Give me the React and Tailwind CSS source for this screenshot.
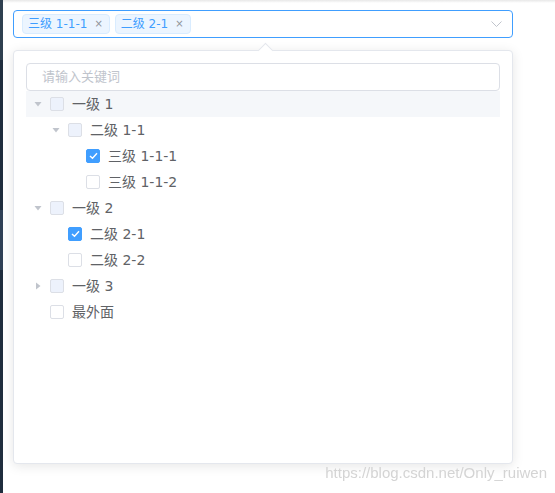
const tree = [
  { label: "一级 1", level: 1, expand: "open", box: "half", hover: true },
  { label: "二级 1-1", level: 2, expand: "open", box: "half" },
  { label: "三级 1-1-1", level: 3, box: "on" },
  { label: "三级 1-1-2", level: 3, box: "off" },
  { label: "一级 2", level: 1, expand: "open", box: "half" },
  { label: "二级 2-1", level: 2, box: "on" },
  { label: "二级 2-2", level: 2, box: "off" },
  { label: "一级 3", level: 1, expand: "closed", box: "half" },
  { label: "最外面", level: 1, box: "off" },
];

const indent = { 1: "pl-0", 2: "pl-[18px]", 3: "pl-[36px]" };

function Caret({ state }) {
  if (!state) return <span className="w-6 shrink-0" />;
  return (
    <span className="w-6 shrink-0 flex items-center justify-center">
      <svg
        width="8"
        height="8"
        viewBox="0 0 8 8"
        className={state === "open" ? "rotate-90" : ""}
      >
        <path d="M2 0.5 L6.5 4 L2 7.5 Z" fill="#c0c4cc" />
      </svg>
    </span>
  );
}

function Checkbox({ state }) {
  if (state === "on") {
    return (
      <span className="w-[14px] h-[14px] rounded-[2px] bg-[#409eff] border border-[#409eff] flex items-center justify-center shrink-0">
        <svg width="9" height="8" viewBox="0 0 9 8">
          <path d="M1 4 L3.5 6.3 L8 1.3" stroke="#fff" strokeWidth="1.4" fill="none" />
        </svg>
      </span>
    );
  }
  return (
    <span
      className={
        "w-[14px] h-[14px] rounded-[2px] border border-[#dcdfe6] shrink-0 " +
        (state === "half" ? "bg-[#edf2fc]" : "bg-white")
      }
    />
  );
}

function Tag({ children }) {
  return (
    <span className="h-5 pl-[5px] pr-[6px] flex items-center gap-[7px] rounded-[4px] bg-[#ecf5ff] border border-[#d9ecff] text-[#409eff] text-[12px]">
      {children}
      <span className="text-[#909399] text-[10px] leading-none">×</span>
    </span>
  );
}

export default function App() {
  return (
    <div
      className="w-[555px] h-[493px] flex bg-white overflow-hidden"
      style={{ fontFamily: '"DejaVu Sans", "Noto Sans CJK SC", sans-serif' }}
    >
      {/* sidebar edge */}
      <div className="w-[3px] flex flex-col">
        <div className="h-[60px] bg-[#2f4050]" />
        <div className="h-[150px] bg-[#1f2d3d]" />
        <div className="h-[60px] bg-[#304156]" />
        <div className="flex-1 bg-[#1f2d3d]" />
      </div>

      <div className="flex-1 relative flex flex-col">
        <div className="h-[3px] bg-gradient-to-b from-[#e8e8e8] to-white" />

        {/* select box */}
        <div className="ml-[10px] mt-[7px] w-[500px] h-[28px] border border-[#409eff] rounded-[4px] flex items-center pl-2 pr-[10px]">
          <div className="flex items-center gap-[5px] flex-1">
            <Tag>三级 1-1-1</Tag>
            <Tag>二级 2-1</Tag>
          </div>
          <svg width="11" height="6" viewBox="0 0 11 6">
            <path d="M0.5 0.5 L5.5 5.5 L10.5 0.5" stroke="#c0c4cc" strokeWidth="1" fill="none" />
          </svg>
        </div>

        {/* dropdown panel */}
        <div className="relative ml-[10px] mt-[12px] w-[500px] h-[414px] bg-white border border-[#e4e7ed] rounded-[4px] shadow-[0_2px_12px_rgba(0,0,0,0.1)] px-3 pt-3">
          <span className="absolute -top-[6px] left-[246px] w-[11px] h-[11px] bg-white border-l border-t border-[#e4e7ed] rotate-45" />
          <div className="h-[28px] border border-[#dcdfe6] rounded-[4px] flex items-center px-[15px] text-[13px] text-[#c0c4cc]">
            请输入关键词
          </div>
          <div className="flex flex-col">
            {tree.map((n) => (
              <div
                key={n.label}
                className={
                  "h-[26px] flex items-center " +
                  indent[n.level] +
                  (n.hover ? " bg-[#f5f7fa]" : "")
                }
              >
                <Caret state={n.expand} />
                <Checkbox state={n.box} />
                <span className="ml-2 text-[14px] text-[#606266]">{n.label}</span>
              </div>
            ))}
          </div>
        </div>

        <div
          className="absolute right-[8px] bottom-[9px] text-[15px] text-[#d4d4d4] blur-[0.3px]"
          style={{ fontFamily: '"Liberation Sans", Arial, sans-serif' }}
        >
          https://blog.csdn.net/Only_ruiwen
        </div>
      </div>
    </div>
  );
}
